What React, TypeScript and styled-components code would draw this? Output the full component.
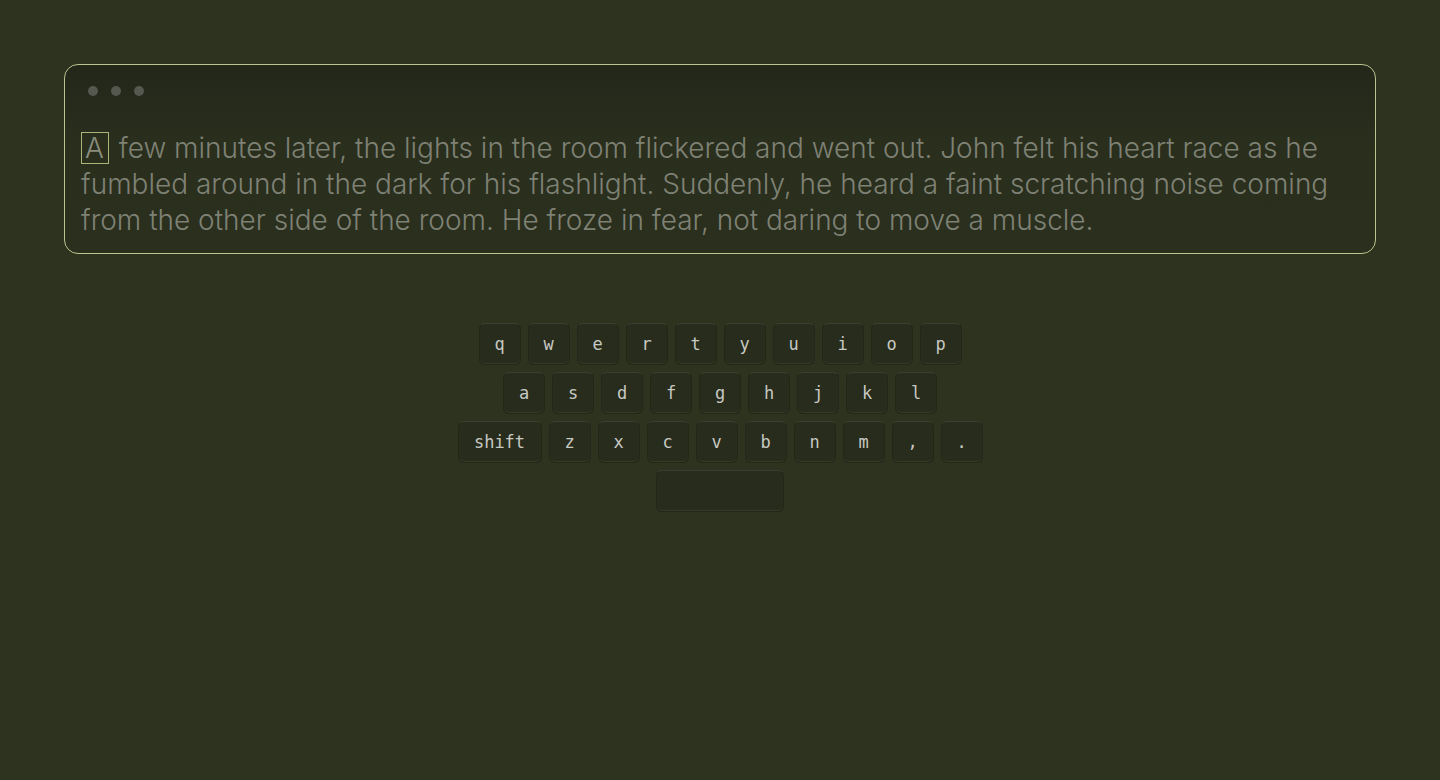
import styled, { createGlobalStyle } from 'styled-components'

const GlobalStyle = createGlobalStyle`
  html, body {
    margin: 0;
    padding: 0;
    background: #2e331f;
  }
  body {
    font-family: Inter, "Noto Sans", sans-serif;
  }
`

const Page = styled.div`
  width: 1440px;
  height: 780px;
  box-sizing: border-box;
  padding: 64px 64px 0;
  background: #2e331f;
  display: flex;
  flex-direction: column;
  align-items: center;
`

const Card = styled.div`
  width: 100%;
  box-sizing: border-box;
  border: 1px solid #b9c48e;
  border-radius: 14px;
  background: linear-gradient(180deg, #23271a 0%, #292e1d 40%, #2a2f1e 100%);
  padding: 21px 16px 15px;
`

const Dots = styled.div`
  display: flex;
  gap: 13px;
  padding-left: 7px;
  margin-bottom: 34px;
`

const Dot = styled.span`
  width: 10px;
  height: 10px;
  border-radius: 50%;
  background: #55584f;
`

const Passage = styled.p`
  margin: 0;
  font-size: 28px;
  font-weight: 300;
  line-height: 36px;
  color: #7e8174;
`

const Cursor = styled.span`
  display: inline-block;
  box-sizing: border-box;
  border: 1px solid #a9b67a;
  padding: 0 4px 0 3px;
  line-height: 30px;
  color: #8a8d7e;
  margin-right: 2px;
`

const Keyboard = styled.div`
  margin-top: 69px;
  display: flex;
  flex-direction: column;
  align-items: center;
  gap: 7px;
`

const Row = styled.div<{ $offset?: number }>`
  display: flex;
  gap: 7px;
  margin-left: ${(p) => p.$offset ?? 0}px;
`

const Key = styled.div<{ $w?: number }>`
  width: ${(p) => p.$w ?? 42}px;
  height: 42px;
  box-sizing: border-box;
  border-radius: 6px;
  background: #282c1c;
  border: 1px solid #232718;
  border-top-color: #3a3f33;
  box-shadow: inset 0 -1px 0 #363b27;
  display: flex;
  align-items: center;
  justify-content: center;
  font-family: "DejaVu Sans Mono", "Liberation Mono", monospace;
  font-size: 17px;
  color: #c6c8c2;
`

const rows = ['qwertyuiop', 'asdfghjkl', 'zxcvbnm,.']

export default function App() {
  return (
    <Page>
      <GlobalStyle />
      <Card>
        <Dots>
          <Dot />
          <Dot />
          <Dot />
        </Dots>
        <Passage>
          <Cursor>A</Cursor> few minutes later, the lights in the room flickered and went out.
          John felt his heart race as he fumbled around in the dark for his flashlight. Suddenly,
          he heard a faint scratching noise coming from the other side of the room. He froze in
          fear, not daring to move a muscle.
        </Passage>
      </Card>
      <Keyboard>
        <Row>
          {rows[0].split('').map((k) => (
            <Key key={k}>{k}</Key>
          ))}
        </Row>
        <Row>
          {rows[1].split('').map((k) => (
            <Key key={k}>{k}</Key>
          ))}
        </Row>
        <Row>
          <Key $w={84}>shift</Key>
          {rows[2].split('').map((k) => (
            <Key key={k}>{k}</Key>
          ))}
        </Row>
        <Row>
          <Key $w={128} />
        </Row>
      </Keyboard>
    </Page>
  )
}
